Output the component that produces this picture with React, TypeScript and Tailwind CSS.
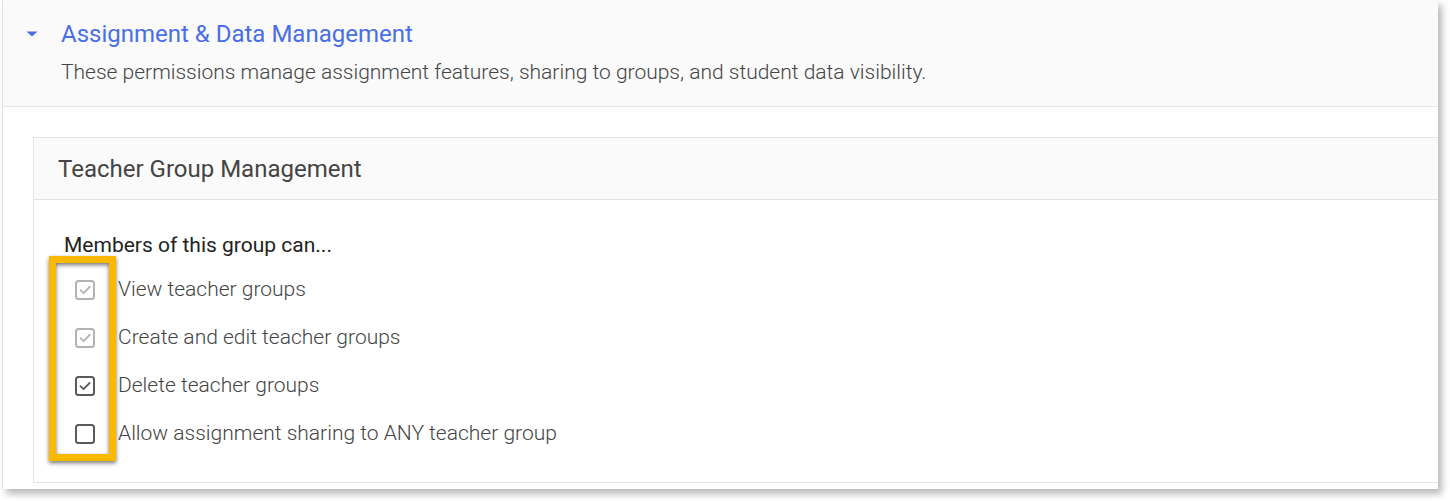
import { ReactNode } from "react";

type Perm = { label: string; state: "disabled" | "checked" | "unchecked" };

const perms: Perm[] = [
  { label: "View teacher groups", state: "disabled" },
  { label: "Create and edit teacher groups", state: "disabled" },
  { label: "Delete teacher groups", state: "checked" },
  { label: "Allow assignment sharing to ANY teacher group", state: "unchecked" },
];

function Checkbox({ state }: { state: Perm["state"] }) {
  const color = state === "disabled" ? "#b3b3b3" : "#5a5a5a";
  return (
    <svg width="20" height="20" viewBox="0 0 20 20" className="shrink-0">
      <rect x="1" y="1" width="18" height="18" rx="2.5" fill="white" stroke={color} strokeWidth="2" />
      {state !== "unchecked" && (
        <path d="M5.5 10.2 L8.6 13.2 L14.6 7" fill="none" stroke={color} strokeWidth="1.8" strokeLinecap="round" strokeLinejoin="round" />
      )}
    </svg>
  );
}

function Row({ children }: { children: ReactNode }) {
  return <div className="flex h-[48px] items-center gap-[23px] pl-[41px]">{children}</div>;
}

export default function App() {
  return (
    <div className="h-[501px] w-[1450px] overflow-hidden bg-white font-['Roboto',sans-serif]">
      <div className="ml-[2px] flex h-[489px] w-[1436px] flex-col border-l border-[#e2e2e2] bg-white shadow-[4px_5px_7px_rgba(0,0,0,0.28)]">
        {/* Section header */}
        <div className="h-[107px] shrink-0 border-b border-[#e6e6e6] bg-[#fafafa] pl-[23px] pt-[17px]">
          <div className="flex items-center gap-[23px]">
            <svg width="12" height="6" viewBox="0 0 12 6">
              <path d="M0.5 0.5 L11.5 0.5 L6 5.5 Z" fill="#4a6ee6" />
            </svg>
            <h2 className="text-[24px] leading-[34px] text-[#4a6ee6]">Assignment &amp; Data Management</h2>
          </div>
          <p className="mt-[6px] pl-[35px] text-[21px] font-light leading-[30px] text-[#444]">
            These permissions manage assignment features, sharing to groups, and student data visibility.
          </p>
        </div>

        {/* Teacher group card */}
        <div className="pl-[30px] pt-[30px]">
          <div className="h-[346px] border border-r-0 border-[#e4e4e4]">
            <div className="flex h-[62px] items-center border-b border-[#e4e4e4] bg-[#fafafa] pl-[24px]">
              <h3 className="text-[24px] text-[#444]">Teacher Group Management</h3>
            </div>
            <div className="relative pt-[31px]">
              <p className="pl-[30px] text-[21px] leading-[28px] text-[#222]">Members of this group can...</p>
              <div className="mt-[7px]">
                {perms.map((p) => (
                  <Row key={p.label}>
                    <Checkbox state={p.state} />
                    <span className="text-[21px] font-light text-[#444]">{p.label}</span>
                  </Row>
                ))}
              </div>
              {/* highlight annotation */}
              <div className="absolute left-[15px] top-[56px] h-[205px] w-[67px] border-[7px] border-[#fbb800] [filter:drop-shadow(0_2px_2px_rgba(0,0,0,0.55))]" />
            </div>
          </div>
        </div>
      </div>
    </div>
  );
}
